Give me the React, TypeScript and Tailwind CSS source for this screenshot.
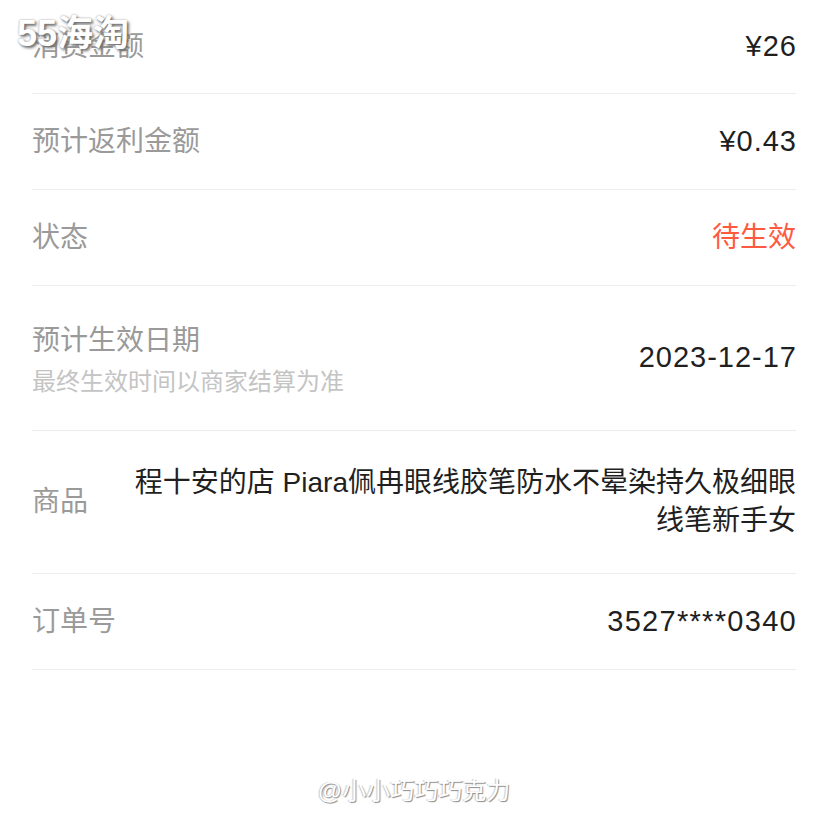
import React from "react";

const rows = [
  { label: "消费金额", value: "¥26", h: "h-[94px]" },
  { label: "预计返利金额", value: "¥0.43", h: "h-[96px]" },
  { label: "状态", value: "待生效", h: "h-[96px]", red: true },
];

export default function App() {
  return (
    <div
      className="relative w-[828px] h-[828px] bg-white overflow-hidden"
      style={{ fontFamily: '"Liberation Sans", "Noto Sans CJK SC", sans-serif' }}
    >
      <div className="px-8">
        {rows.map((r) => (
          <div
            key={r.label}
            className={`${r.h} flex items-center justify-between border-b border-[#ececec]`}
          >
            <span className="text-[28px] text-[#9a9a9a]">{r.label}</span>
            <span
              className={
                r.red
                  ? "text-[28px] text-[#ff5a40]"
                  : "-mr-[1px] text-[29px] tracking-[1px] text-[#1f1f1f]"
              }
            >
              {r.value}
            </span>
          </div>
        ))}

        <div className="h-[145px] flex items-center justify-between border-b border-[#ececec]">
          <div className="flex flex-col">
            <span className="text-[28px] leading-[40px] text-[#9a9a9a]">预计生效日期</span>
            <span className="mt-[8px] text-[24px] leading-[26px] text-[#c4c4c4]">最终生效时间以商家结算为准</span>
          </div>
          <span className="-mr-[1px] text-[29px] tracking-[1px] text-[#1f1f1f]">2023-12-17</span>
        </div>

        <div className="h-[143px] flex items-center justify-between border-b border-[#ececec] text-[28px]">
          <span className="text-[#9a9a9a]">商品</span>
          <span className="text-right leading-[38px] text-[#1f1f1f]">
            程十安的店 Piara佩冉眼线胶笔防水不晕染持久极细眼
            <br />
            线笔新手女
          </span>
        </div>

        <div className="h-[96px] flex items-center justify-between border-b border-[#ececec]">
          <span className="text-[28px] text-[#9a9a9a]">订单号</span>
          <span className="-mr-[1px] text-[29px] tracking-[1.3px] text-[#1f1f1f]">3527****0340</span>
        </div>
      </div>

      <div className="mt-[105px] flex justify-center">
        <span
          className="text-[24px] leading-[32px] text-white"
          style={{ textShadow: "1px 1px 1px #8a8a8a, -1px 0 1px #c8c8c8" }}
        >
          @小小巧巧巧克力
        </span>
      </div>

      <div
        className="absolute left-[17px] top-[12px] text-[36px] leading-[44px] font-bold text-white"
        style={{ textShadow: "2px 2px 3px #6b6b6b, 0 0 2px #9a9a9a" }}
      >
        55海淘
      </div>
    </div>
  );
}
